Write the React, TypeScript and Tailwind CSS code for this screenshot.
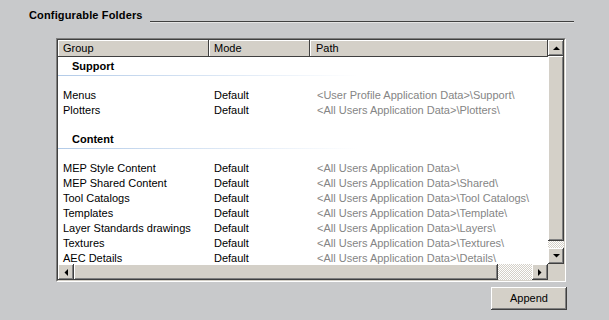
import React from 'react';

type Row = { group: string; mode: string; path: string };

const sections: { title: string; rows: Row[] }[] = [
  {
    title: 'Support',
    rows: [
      { group: 'Menus', mode: 'Default', path: '<User Profile Application Data>\\Support\\' },
      { group: 'Plotters', mode: 'Default', path: '<All Users Application Data>\\Plotters\\' },
    ],
  },
  {
    title: 'Content',
    rows: [
      { group: 'MEP Style Content', mode: 'Default', path: '<All Users Application Data>\\' },
      { group: 'MEP Shared Content', mode: 'Default', path: '<All Users Application Data>\\Shared\\' },
      { group: 'Tool Catalogs', mode: 'Default', path: '<All Users Application Data>\\Tool Catalogs\\' },
      { group: 'Templates', mode: 'Default', path: '<All Users Application Data>\\Template\\' },
      { group: 'Layer Standards drawings', mode: 'Default', path: '<All Users Application Data>\\Layers\\' },
      { group: 'Textures', mode: 'Default', path: '<All Users Application Data>\\Textures\\' },
      { group: 'AEC Details', mode: 'Default', path: '<All Users Application Data>\\Details\\' },
    ],
  },
];

const raised =
  'bg-[#d4d0c8] shadow-[inset_-1px_-1px_#404040,inset_1px_1px_#ffffff,inset_-2px_-2px_#808080]';
const headerCell = 'bg-[#d4d0c8] shadow-[inset_-1px_-1px_#404040,inset_1px_1px_#ffffff]';

const Arrow = ({ dir }: { dir: 'up' | 'down' | 'left' | 'right' }) => {
  const pts = {
    up: '0,4 7,4 3.5,0.5',
    down: '0,0 7,0 3.5,3.5',
    left: '4,0 4,7 0.5,3.5',
    right: '0,0 0,7 3.5,3.5',
  }[dir];
  const vertical = dir === 'up' || dir === 'down';
  return (
    <div className={`w-[16px] h-[16px] flex items-center justify-center ${raised}`}>
      <svg width={vertical ? 7 : 4} height={vertical ? 4 : 7} viewBox={vertical ? '0 0 7 4' : '0 0 4 7'}>
        <polygon points={pts} fill="#000" />
      </svg>
    </div>
  );
};

const Checker = ({ className }: { className: string }) => (
  <div
    className={`${className} bg-[repeating-conic-gradient(#d4d0c8_0%_25%,#ffffff_0%_50%)] bg-[length:2px_2px]`}
  />
);

export default function App() {
  return (
    <div className="w-[609px] h-[320px] overflow-hidden bg-[#c8c9cb] font-['Liberation_Sans',Arial,sans-serif] text-[11px] text-black">
      {/* title */}
      <div className="flex pl-[29px] pr-[35px] pt-[9px]">
        <span className="font-bold leading-[13px] tracking-[0.15px]">Configurable Folders</span>
        <div className="flex-1 ml-[7px] mt-[12px] h-[2px] border-t border-[#404040] border-b border-b-[#e4e4e4]" />
      </div>

      {/* list frame */}
      <div className="ml-[56px] mt-[15px] w-[510px] h-[244px] border border-t-[#808080] border-l-[#808080] border-b-white border-r-white">
        <div className="w-full h-full border border-t-[#404040] border-l-[#404040] border-b-[#d4d0c8] border-r-[#d4d0c8] bg-white flex flex-col">
          <div className="flex h-[224px]">
            {/* main list */}
            <div className="w-[490px] h-full overflow-hidden flex flex-col">
              <div className="flex h-[17px] leading-[16px] shrink-0">
                <div className={`w-[151px] pl-[5px] ${headerCell}`}>Group</div>
                <div className={`w-[101px] pl-[5px] ${headerCell}`}>Mode</div>
                <div className={`flex-1 pl-[6px] ${headerCell}`}>Path</div>
              </div>
              {sections.map((s, i) => (
                <div key={s.title} className={i > 0 ? 'pt-[12px]' : ''}>
                  <div className="h-[18px] pt-[2px] pl-[14px] leading-[15px] font-bold">{s.title}</div>
                  <div className="w-[300px] h-px bg-linear-to-r from-[#b3cbe8] to-white" />
                  <div className="mt-[12px]">
                    {s.rows.map((r) => (
                      <div key={r.group} className="flex h-[15px] leading-[14px] whitespace-nowrap">
                        <div className="w-[151px] pl-[5px]">{r.group}</div>
                        <div className="w-[101px] pl-[5px]">{r.mode}</div>
                        <div className="flex-1 pl-[7px] text-[#858585]">{r.path}</div>
                      </div>
                    ))}
                  </div>
                </div>
              ))}
            </div>
            {/* vertical scrollbar */}
            <div className="w-[16px] h-full flex flex-col">
              <Arrow dir="up" />
              <div className={`h-[185px] ${raised}`} />
              <Checker className="flex-1" />
              <Arrow dir="down" />
            </div>
          </div>
          {/* horizontal scrollbar */}
          <div className="flex h-[16px]">
            <Arrow dir="left" />
            <div className={`w-[424px] ${raised}`} />
            <Checker className="w-[34px]" />
            <Arrow dir="right" />
            <div className="flex-1 bg-[#d4d0c8]" />
          </div>
        </div>
      </div>

      {/* button */}
      <div className="ml-[491px] mt-[5px]">
        <button className={`w-[76px] h-[23px] text-[11px] text-black ${raised}`}>Append</button>
      </div>
    </div>
  );
}
